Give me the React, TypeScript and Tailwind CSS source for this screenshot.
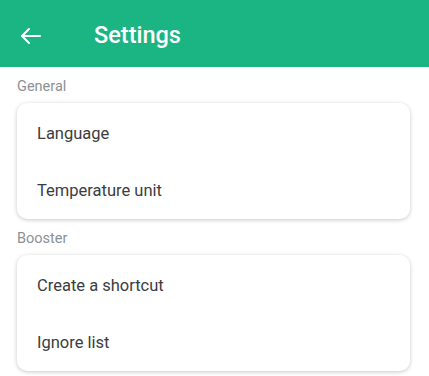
import React from "react"

const sections = [
    { title: "General", items: ["Language", "Temperature unit"] },
    { title: "Booster", items: ["Create a shortcut", "Ignore list"] },
]

const BackArrow = () => (
    <svg width="24" height="24" viewBox="0 0 24 24" fill="none" stroke="white" strokeWidth="2" strokeLinecap="round" strokeLinejoin="round">
        <path d="M21 12H3" />
        <path d="M10 5l-7 7 7 7" />
    </svg>
)

const App = () => {
    return (
        <div className="w-[429px] h-[376px] bg-white overflow-hidden" style={{ fontFamily: "Roboto, 'Noto Sans', sans-serif" }}>
            <div className="h-[67px] pt-[4px] bg-[#1bb583] flex items-center">
                <div className="pl-[19px] w-[94px] flex items-center">
                    <BackArrow />
                </div>
                <h1 className="text-white text-[23.5px] font-medium">Settings</h1>
            </div>
            {sections.map(section => (
                <div key={section.title}>
                    <div className="pl-[17px] pt-[10px] pb-[6px] h-[36px] leading-[20px] text-[14.5px] text-[#8c9196]">{section.title}</div>
                    <div className="mx-[17px] w-[393px] rounded-[10px] bg-white py-[1px] shadow-[0_1px_4px_rgba(0,0,0,0.22)]">
                        {section.items.map(item => (
                            <div key={item} className="h-[57px] pt-[4px] flex items-center pl-[20px] text-[16.5px] text-[#3a3d40]">{item}</div>
                        ))}
                    </div>
                </div>
            ))}
        </div>
    )
}

export default App
